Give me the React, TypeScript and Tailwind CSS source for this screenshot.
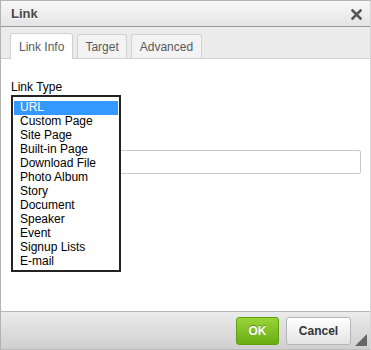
import React from "react";

const items = [
  "URL",
  "Custom Page",
  "Site Page",
  "Built-in Page",
  "Download File",
  "Photo Album",
  "Story",
  "Document",
  "Speaker",
  "Event",
  "Signup Lists",
  "E-mail",
];

export default function App() {
  return (
    <div
      className="w-[371px] h-[350px] bg-white overflow-hidden"
      style={{ fontFamily: '"Liberation Sans", Arial, sans-serif' }}
    >
      <div className="relative w-[371px] h-[350px] flex flex-col border-l border-t border-[#b2b2b2] border-r-[#d6d6d6] border-r">
        {/* Title bar */}
        <div className="h-[26px] flex items-center justify-between pl-[10px] pr-[8px] bg-gradient-to-b from-[#f8f8f8] to-[#e4e4e4] border-b border-[#999]">
          <span className="text-[13px] font-bold text-[#474747] leading-[15px] [text-shadow:0_1px_0_#fff]">
            Link
          </span>
          <svg width="11" height="11" viewBox="0 0 11 11" className="mt-[1px]">
            <path d="M1.5 1.5 L9.5 9.5 M9.5 1.5 L1.5 9.5" stroke="#555" strokeWidth="2.6" strokeLinecap="square" />
          </svg>
        </div>
        {/* Tabs */}
        <div className="h-[32px] bg-[#ebebeb] border-b border-[#d1d1d1] flex items-end pl-[9px] gap-[4px]">
          <div className="h-[26px] -mb-px px-[8px] flex items-center bg-white border border-b-0 border-[#d1d1d1] rounded-t-[3px] text-[12px] text-[#595959]">
            Link Info
          </div>
          <div className="h-[24px] px-[7px] flex items-center bg-[#f3f3f3] border border-b-0 border-[#d1d1d1] rounded-t-[3px] text-[12px] text-[#595959]">
            Target
          </div>
          <div className="h-[24px] px-[8px] flex items-center bg-[#f3f3f3] border border-b-0 border-[#d1d1d1] rounded-t-[3px] text-[12px] text-[#595959]">
            Advanced
          </div>
        </div>
        {/* Content */}
        <div className="flex-1 relative bg-white px-[10px] pt-[21px]">
          <div className="text-[12px] leading-[14px] text-black">Link Type</div>
          <div className="h-[40px]" />
          <div className="mt-[16px] h-[24px] w-[350px] border border-[#c9c9c9] rounded-[2px] bg-white" />

          {/* Open listbox */}
          <div className="absolute left-[10px] top-[36px] w-[110px] border-2 border-[#222] bg-white pt-[4px] pb-[1px] px-[1px]">
            {items.map((it, i) => (
              <div
                key={it}
                className={
                  "h-[14px] leading-[13px] pl-[6px] text-[12px] whitespace-nowrap " +
                  (i === 0 ? "bg-[#3399ff] text-white" : "text-black")
                }
              >
                {it}
              </div>
            ))}
          </div>
        </div>
        {/* Footer */}
        <div className="relative h-[39px] border-t border-[#b6b6b6] border-b border-b-[#bdbdbd] bg-gradient-to-b from-[#ebebeb] to-[#cfcfcf] flex items-center justify-end pr-[19px] gap-[7px]">
          <div className="w-[43px] h-[28px] rounded-[3px] border border-[#5e9d12] bg-gradient-to-b from-[#9ad33a] to-[#69ad0e] flex items-center justify-center text-[12px] font-bold text-white [text-shadow:0_-1px_0_#5a900a]">
            OK
          </div>
          <div className="w-[65px] h-[28px] rounded-[3px] border border-[#b6b6b6] bg-gradient-to-b from-[#ffffff] to-[#e4e4e4] flex items-center justify-center text-[12px] font-bold text-[#333]">
            Cancel
          </div>
          <svg width="12" height="12" viewBox="0 0 12 12" className="absolute right-[3px] bottom-[3px]">
            <path d="M12 0 L12 12 L0 12 Z" fill="#666" />
          </svg>
        </div>
      </div>
    </div>
  );
}
